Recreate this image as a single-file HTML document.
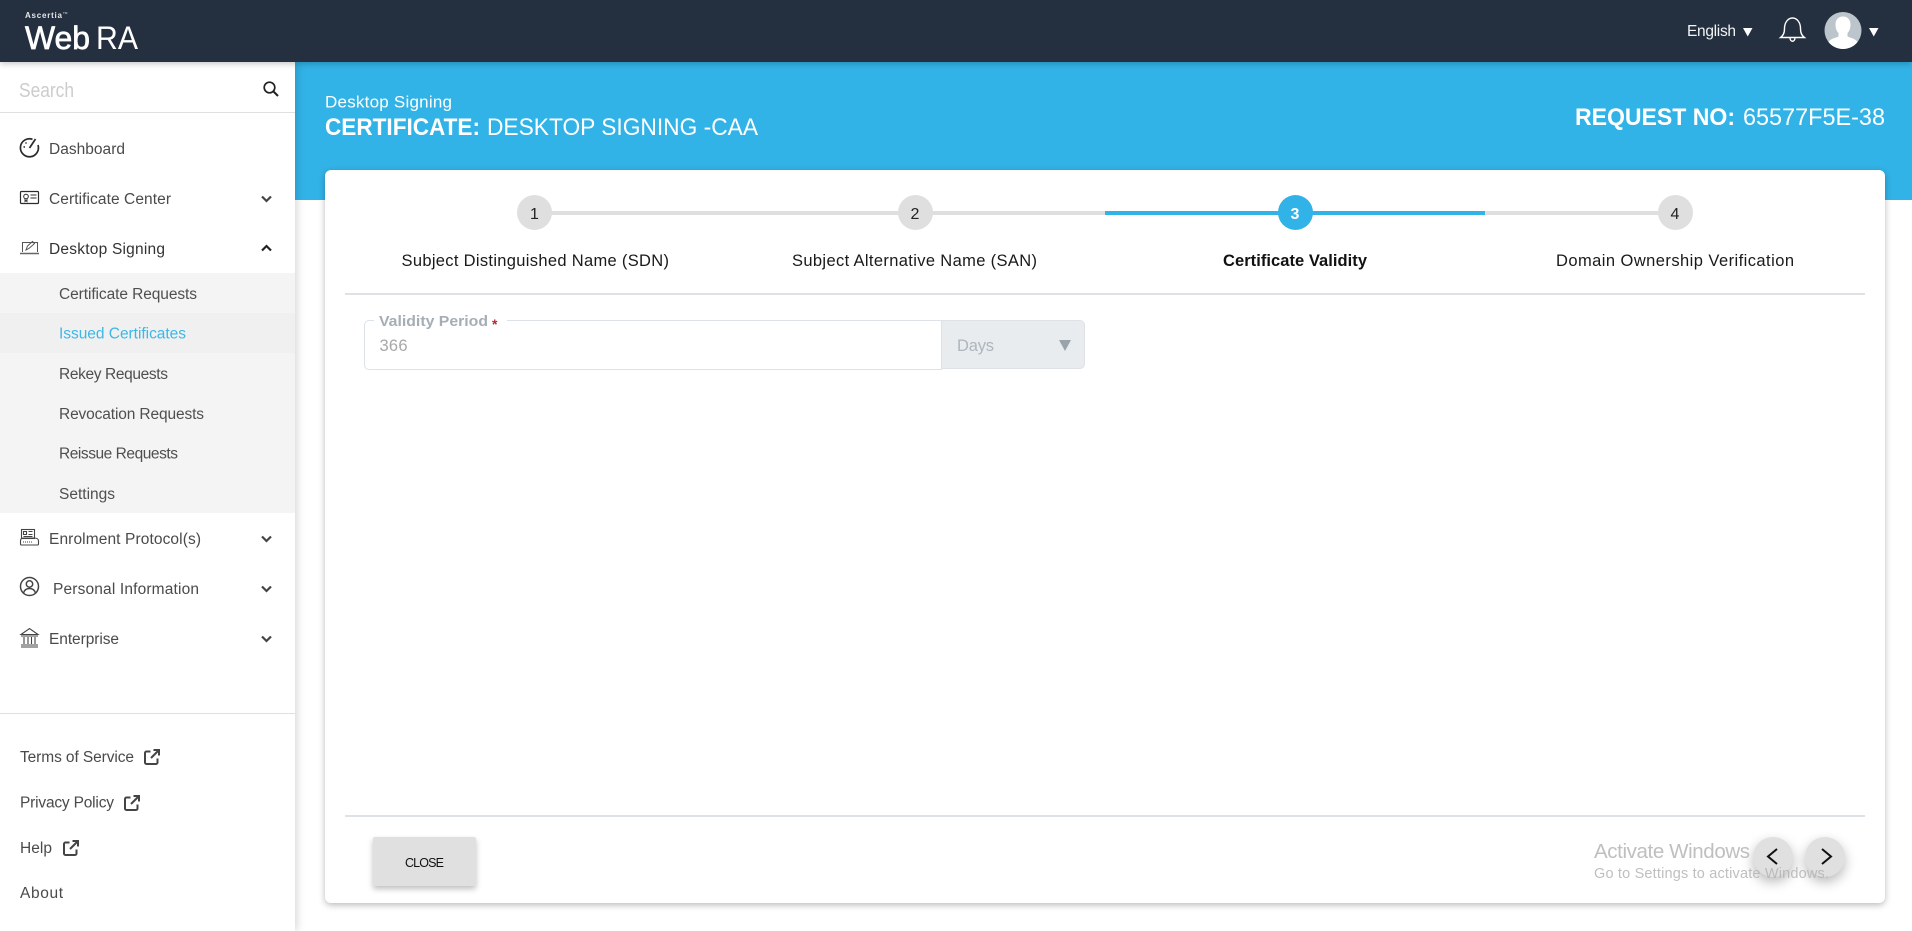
<!DOCTYPE html>
<html lang="en">
<head>
<meta charset="utf-8">
<title>WebRA</title>
<style>
html,body{margin:0;padding:0;width:1912px;height:931px;overflow:hidden;background:#fff;font-family:"Liberation Sans",sans-serif}
div{position:absolute;box-sizing:border-box}
svg{position:absolute;left:0;top:0}
text{font-family:"Liberation Sans",sans-serif}
.m{font-size:15.500px;fill:#4a4a4a}
.s{font-size:15.500px;fill:#4f4f4f}
.l{font-size:16.500px;fill:#1a1a1a}
</style>
</head>
<body>
<div style="left:295px;top:62px;width:1617px;height:138px;background:#32b3e7"></div>
<div style="left:325px;top:170px;width:1560px;height:733px;background:#fff;border-radius:6px;box-shadow:0 2px 7px rgba(0,0,0,.28)"></div>
<div style="left:0;top:62px;width:295px;height:869px;background:#fff;box-shadow:2px 0 8px rgba(0,0,0,.16)"></div>
<div style="left:0;top:0;width:1912px;height:62px;background:#242f3f;box-shadow:0 2px 6px rgba(0,0,0,.22)"></div>
<div style="left:0;top:112px;width:295px;height:1px;background:#e0e0e0"></div>
<div style="left:0;top:273px;width:295px;height:240px;background:#f4f4f4"></div>
<div style="left:0;top:313px;width:295px;height:40px;background:#f0f0f0"></div>
<div style="left:0;top:713px;width:295px;height:1px;background:#e0e0e0"></div>
<div style="left:345px;top:293px;width:1520px;height:2px;background:#dee2e6"></div>
<div style="left:345px;top:815px;width:1520px;height:2px;background:#dee2e6"></div>
<div style="left:535px;top:211px;width:1140px;height:4px;background:#dfdfdf"></div>
<div style="left:1105px;top:211px;width:380px;height:4px;background:#32b3e7"></div>
<div style="left:517px;top:195px;width:35px;height:35px;border-radius:50%;background:#dfdfdf"></div>
<div style="left:898px;top:195px;width:35px;height:35px;border-radius:50%;background:#dfdfdf"></div>
<div style="left:1278px;top:195px;width:35px;height:35px;border-radius:50%;background:#32b3e7"></div>
<div style="left:1658px;top:195px;width:35px;height:35px;border-radius:50%;background:#dfdfdf"></div>
<div style="left:364px;top:320px;width:578px;height:50px;border:1px solid #dee2e6;border-radius:5px 0 0 5px;background:#fff"></div>
<div style="left:374px;top:318px;width:133px;height:4px;background:#fff"></div>
<div style="left:941px;top:320px;width:144px;height:49px;border:1px solid #dee2e6;border-radius:0 5px 5px 0;background:#e9ecef"></div>
<div style="left:373px;top:837px;width:103px;height:49px;background:#e0e0e0;border-radius:2px;box-shadow:0 3px 6px rgba(0,0,0,.25)"></div>
<div style="left:1753px;top:837px;width:40px;height:40px;border-radius:50%;background:#e0e0e0;box-shadow:0 5px 12px rgba(0,0,0,.28)"></div>
<div style="left:1805px;top:837px;width:40px;height:40px;border-radius:50%;background:#e0e0e0;box-shadow:0 5px 12px rgba(0,0,0,.28)"></div>

<svg width="1912" height="931" viewBox="0 0 1912 931" xmlns="http://www.w3.org/2000/svg">
<defs>
<g id="ext" fill="none" stroke="#444" stroke-width="2">
<path d="M6.500 2.500H2.500A1.500 1.500 0 0 0 1 4v9.500A1.500 1.500 0 0 0 2.500 15h9.500a1.500 1.500 0 0 0 1.500-1.500V9.500"/>
<path d="M9.500 1H15V6.500M15 1L7 9"/>
</g>
<path id="cd" d="M-4.500-2.500L0 2 4.500-2.500" fill="none" stroke="#444" stroke-width="2.200"/>
</defs>

<!-- logo -->
<text x="25" y="18" font-size="8" font-weight="700" fill="#e6e8ea" textLength="37" lengthAdjust="spacing">Ascertia</text>
<text x="63" y="14" font-size="3" fill="#e6e8ea">TM</text>
<text x="25" y="49" font-size="32" fill="#fff" stroke="#fff" stroke-width=".7" textLength="65" lengthAdjust="spacingAndGlyphs">Web</text>
<text x="96" y="49" font-size="32" fill="#fff" textLength="42" lengthAdjust="spacingAndGlyphs">RA</text>

<!-- header right -->
<text x="1687" y="36" font-size="15.500" fill="#f2f4f5" textLength="49">English</text>
<path d="M1743 28h9.500l-4.750 8.500z" fill="#fff"/>
<g fill="none" stroke="#fff" stroke-width="1.400">
<path d="M1780.500 37.500c2.500-2 4-4 4-9 0-6 3.500-10.500 8-10.500s8 4.500 8 10.500c0 5 1.500 7 4 9z"/>
<path d="M1790 37.500c0 5 5 5 5 0"/>
</g>
<circle cx="1843" cy="30.500" r="18.500" fill="#bcc5cb"/>
<path d="M1828.500 42c2-3.500 7-4 10-5.500v-3.500c-2-2-3-5-3-8.500 0-5 3-8 7.500-8s7.500 3 7.500 8c0 3.500-1 6.500-3 8.500v3.500c3 1.500 8 2 10 5.500a18.500 18.500 0 0 1-29 0z" fill="#fff"/>
<path d="M1869 28h9.500l-4.750 8.500z" fill="#fff"/>

<!-- search -->
<text x="19" y="97" font-size="20" fill="#cccccc" textLength="55" lengthAdjust="spacingAndGlyphs">Search</text>
<circle cx="269.500" cy="87.500" r="5.300" fill="none" stroke="#222" stroke-width="1.700"/>
<path d="M273.500 91.500L278 96" stroke="#222" stroke-width="2"/>

<!-- nav icons -->
<g fill="none" stroke="#2b2b2b" stroke-width="1.400">
<path d="M32.500 139.300A9 9 0 1 0 38 145" stroke-width="1.700"/><path d="M29.500 148L35.500 139" stroke-width="1.700"/><path d="M25.500 142.500l1 1M23.500 147h1.500"/>
<rect x="20.500" y="191.500" width="18" height="12" rx="1" stroke-width="1.200"/>
<circle cx="26" cy="196.500" r="2.300" stroke-width="1"/><path d="M25 199v2.500l1-1 1 1V199" stroke-width=".9"/><path d="M30.500 195h6M30.500 198h6" stroke-width="1"/>
<path d="M22.500 252V242.500h15V252" stroke-width="1" stroke="#555"/><path d="M20 253.500h19" stroke="#666" stroke-width="1.400"/><path d="M26 250l1.500-4 5-4.500 2 2-5 4.500z" stroke-width="1" stroke="#555"/>
</g>
<g fill="none" stroke="#444" stroke-width="1.100">
<rect x="21.500" y="529.500" width="13" height="9"/><path d="M23.500 531.500h3v3h-3zM28.500 531.500h4M28.500 534.500h4M23.500 536.500h9"/>
<path d="M20.500 541c0-2 1-3 3-3h11c2 0 4 1 4 3v3c0 .5-.5 1-1 1h-16c-.5 0-1-.5-1-1z"/><path d="M23 542h9" stroke-dasharray="1 1"/>
</g>
<g fill="none" stroke="#444" stroke-width="1.500">
<circle cx="29.500" cy="586.500" r="9"/><circle cx="29.500" cy="584" r="3.200"/><path d="M23.500 593c1-3.500 3.500-4.500 6-4.500s5 1 6 4.500"/>
</g>
<g fill="none" stroke="#444" stroke-width="1.100">
<path d="M21 634.500h17L29.500 628.500zM21 636h17M21 645h17M21 647h17M24 637v7M28 637v7M31.500 637v7M35 637v7"/>
</g>
<use href="#cd" x="266.500" y="199"/>
<path d="M262 250.500L266.500 246l4.500 4.500" fill="none" stroke="#222" stroke-width="2.200"/>
<use href="#cd" x="266.500" y="539"/>
<use href="#cd" x="266.500" y="589"/>
<use href="#cd" x="266.500" y="639"/>

<!-- nav text -->
<text class="m" x="49" y="154" textLength="76">Dashboard</text>
<text class="m" x="49" y="204" textLength="122">Certificate Center</text>
<text class="m" x="49" y="254" textLength="116" style="fill:#333">Desktop Signing</text>
<text class="s" x="59" y="299" textLength="138">Certificate Requests</text>
<text class="s" x="59" y="338.500" textLength="127" style="fill:#3db7e8">Issued Certificates</text>
<text class="s" x="59" y="379" textLength="109">Rekey Requests</text>
<text class="s" x="59" y="419" textLength="145">Revocation Requests</text>
<text class="s" x="59" y="458.500" textLength="119">Reissue Requests</text>
<text class="s" x="59" y="499" textLength="56">Settings</text>
<text class="m" x="49" y="544" textLength="152">Enrolment Protocol(s)</text>
<text class="m" x="53" y="594" textLength="146">Personal Information</text>
<text class="m" x="49" y="644" textLength="70">Enterprise</text>

<text class="m" x="20" y="762" textLength="114">Terms of Service</text>
<use href="#ext" x="144" y="749"/>
<text class="m" x="20" y="807.500" textLength="94">Privacy Policy</text>
<use href="#ext" x="124" y="795"/>
<text class="m" x="20" y="853" textLength="32">Help</text>
<use href="#ext" x="63" y="840"/>
<text class="m" x="20" y="898" textLength="43">About</text>

<!-- banner -->
<text x="325" y="107.500" font-size="17" fill="#fff" textLength="127">Desktop Signing</text>
<text x="325" y="135" font-size="24" font-weight="700" fill="#fff" textLength="155" lengthAdjust="spacingAndGlyphs">CERTIFICATE:</text>
<text x="487" y="135" font-size="24" fill="#fff" textLength="271" lengthAdjust="spacingAndGlyphs">DESKTOP SIGNING -CAA</text>
<text x="1575" y="125" font-size="24" font-weight="700" fill="#fff" textLength="160" lengthAdjust="spacingAndGlyphs">REQUEST NO:</text>
<text x="1743" y="125" font-size="24" fill="#fff" textLength="142" lengthAdjust="spacingAndGlyphs">65577F5E-38</text>

<!-- stepper -->
<text x="534.500" y="219" font-size="16" fill="#222" text-anchor="middle">1</text>
<text x="915" y="219" font-size="16" fill="#222" text-anchor="middle">2</text>
<text x="1295" y="219" font-size="16" font-weight="700" fill="#fff" text-anchor="middle">3</text>
<text x="1675" y="219" font-size="16" fill="#222" text-anchor="middle">4</text>
<text class="l" x="401.500" y="266" textLength="267.500">Subject Distinguished Name (SDN)</text>
<text class="l" x="792" y="266" textLength="245">Subject Alternative Name (SAN)</text>
<text class="l" x="1223" y="266" textLength="144" font-weight="700" style="fill:#111">Certificate Validity</text>
<text class="l" x="1556" y="266" textLength="238">Domain Ownership Verification</text>

<!-- form -->
<text x="379" y="326" font-size="15" font-weight="700" fill="#a5adb5" textLength="109" lengthAdjust="spacingAndGlyphs">Validity Period</text>
<text x="492" y="329" font-size="14" font-weight="700" fill="#b02a37">*</text>
<text x="379.500" y="351" font-size="16.500" fill="#a8a8a8" textLength="28">366</text>
<text x="957" y="351" font-size="16.500" fill="#adb5bd" textLength="37">Days</text>
<path d="M1059 340h12l-6 11z" fill="#9aa3ab"/>

<!-- footer -->
<text x="405" y="867" font-size="12.500" fill="#111" textLength="39" lengthAdjust="spacing">CLOSE</text>
<path d="M1777 849l-9 7.500 9 7.500" fill="none" stroke="#111" stroke-width="2"/>
<path d="M1822 849l9 7.500-9 7.500" fill="none" stroke="#111" stroke-width="2"/>
<text x="1594" y="858" font-size="20.500" fill="#b4b4b4" fill-opacity=".85" textLength="156">Activate Windows</text>
<text x="1594" y="878" font-size="14.500" fill="#b4b4b4" fill-opacity=".85" textLength="235">Go to Settings to activate Windows.</text>
</svg>
</body>
</html>
